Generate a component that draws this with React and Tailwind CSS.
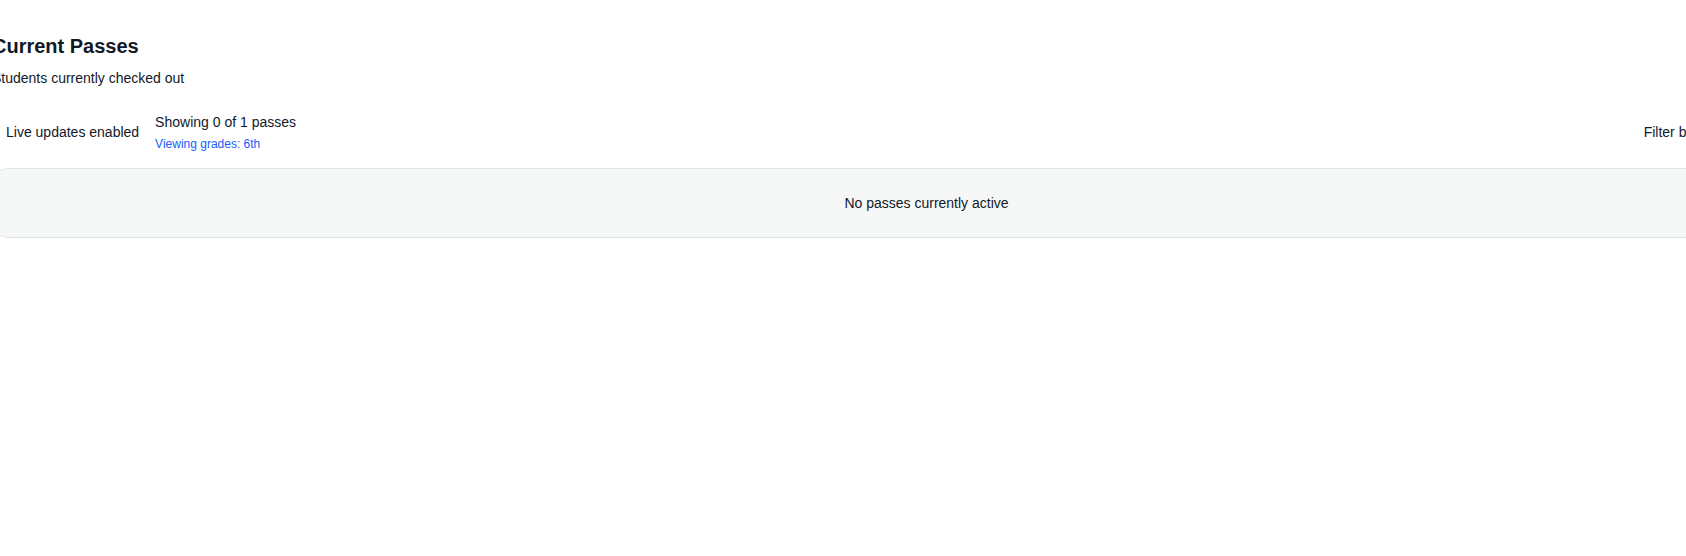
import React from 'react';

const App = () => {
  const shown = 0;
  const total = 1;

  return (
    <div className="w-full min-h-screen bg-white overflow-hidden font-['Liberation_Sans',Arial,sans-serif] text-[#111827]">
      <div className="-ml-[8px] w-[1869px] pt-8">
        {/* Header */}
        <h2 className="text-xl font-bold leading-7">Current Passes</h2>
        <p className="mt-2 text-sm leading-5">Students currently checked out</p>

        {/* Status row */}
        <div className="mt-6 flex items-center justify-between">
          <div className="flex items-center gap-4">
            <div className="flex items-center gap-1.5">
              <span className="w-2 h-2 rounded-full bg-green-500" />
              <span className="text-sm leading-5">Live updates enabled</span>
            </div>
            <div className="flex flex-col">
              <span className="text-sm leading-5">
                Showing {shown} of {total} passes
              </span>
              <span className="mt-1 text-xs leading-4 text-blue-600">Viewing grades: 6th</span>
            </div>
          </div>
          <div className="flex items-center gap-3">
            <span className="text-sm leading-5">Filter by grade:</span>
            <select className="h-8 w-[112px] rounded-md border border-[#dfe5ea] bg-white px-2 text-sm">
              <option>6th</option>
            </select>
          </div>
        </div>

        {/* Empty state */}
        <div className="mt-4 rounded-2xl border border-[#dfe5ea] bg-[#f6f8f8] py-6 text-center">
          <p className="text-sm leading-5">No passes currently active</p>
        </div>
      </div>
    </div>
  );
};

export default App;
